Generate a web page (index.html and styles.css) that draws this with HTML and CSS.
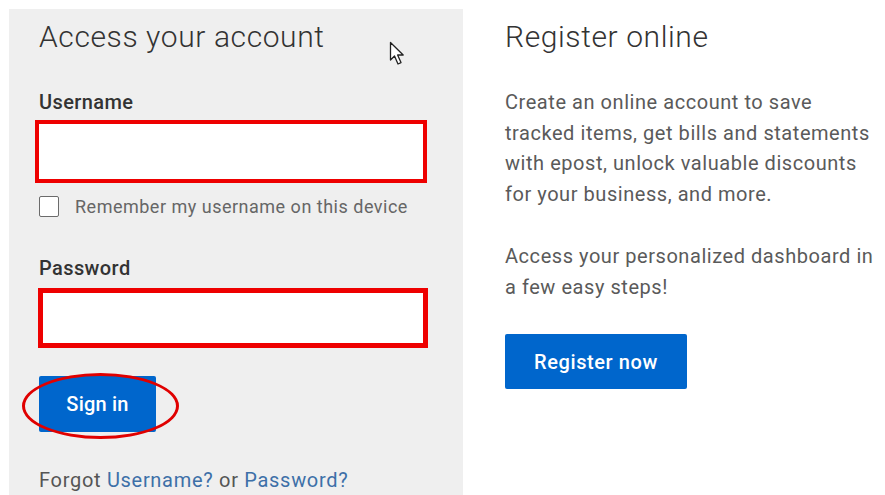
FILE: index.html
```html
<!DOCTYPE html>
<html lang="en">
<head>
<meta charset="utf-8">
<title>Sign in</title>
<link rel="stylesheet" href="styles.css">
</head>
<body>
<main class="page">
  <section class="login">
    <h1 class="title">Access your account</h1>
    <label class="field-label" for="username">Username</label>
    <input class="field field-user" id="username" type="text">
    <label class="remember">
      <span class="box"></span>
      <span class="remember-text">Remember my username on this device</span>
    </label>
    <label class="field-label field-label-pw" for="password">Password</label>
    <input class="field field-pw" id="password" type="password">
    <div class="signin-wrap">
      <button class="btn btn-signin" type="button">Sign in</button>
      <span class="ring"></span>
    </div>
    <p class="forgot">Forgot <a href="#">Username?</a> or <a href="#">Password?</a></p>
    <svg class="pointer" width="17" height="25" viewBox="0 0 17 25">
      <path d="M1.5 1.5 L1.5 19 L5.5 15 L9 23 L12 21.6 L8.6 14 L14.2 14 Z" fill="#fff" stroke="#222" stroke-width="1.3" stroke-linejoin="round"/>
    </svg>
  </section>
  <section class="register">
    <h2 class="title">Register online</h2>
    <p class="copy">Create an online account to save tracked items, get bills and statements with epost, unlock valuable discounts for your business, and more.</p>
    <p class="copy">Access your personalized dashboard in a few easy steps!</p>
    <button class="btn btn-register" type="button">Register now</button>
  </section>
</main>
</body>
</html>
```
FILE: styles.css
```css
* { box-sizing: border-box; }

html, body {
  margin: 0;
  background: #fff;
  font-family: Roboto, "Liberation Sans", sans-serif;
  overflow: hidden;
}

.page {
  display: flex;
  align-items: flex-start;
  height: 495px;
}

.login {
  position: relative;
  margin: 9px 0 0 9px;
  width: 454px;
  height: 500px;
  padding: 10px 0 0 30px;
  background: #efefef;
  display: flex;
  flex-direction: column;
  align-items: flex-start;
}

.title {
  margin: 0;
  font-size: 30px;
  line-height: 36px;
  font-weight: 300;
  letter-spacing: 0.6px;
  color: #333;
}

.field-label {
  margin-top: 35px;
  font-size: 20px;
  line-height: 24px;
  font-weight: 500;
  letter-spacing: 0.4px;
  color: #333;
}

.field-label-pw { margin-top: 39px; }

.field {
  display: block;
  background: #fff;
  border: 4px solid #ee0000;
  border-radius: 0;
  outline: none;
}

.field-user {
  margin: 6px 0 0 -4px;
  width: 392px;
  height: 63px;
}

.field-pw {
  margin: 8px 0 0 -1px;
  width: 390px;
  height: 60px;
  border-width: 5px;
}

.remember {
  margin-top: 13px;
  display: flex;
  align-items: center;
  gap: 16px;
  height: 21px;
}

.box {
  width: 20px;
  height: 21px;
  border: 1.5px solid #6b6b6b;
  border-radius: 2px;
  background: #fff;
}

.remember-text {
  font-size: 18px;
  letter-spacing: 0.5px;
  color: #666;
}

.signin-wrap {
  position: relative;
  margin-top: 28px;
}

.btn {
  border: 0;
  border-radius: 2px;
  background: #0066cc;
  color: #fff;
  font-family: inherit;
  font-weight: 500;
}

.btn-signin {
  display: block;
  width: 117px;
  height: 56px;
  font-size: 20px;
  letter-spacing: 0.2px;
}

/* hand-drawn style highlight ring around the sign-in button */
.ring {
  position: absolute;
  left: -17px;
  top: -3px;
  width: 157px;
  height: 66px;
  border: 3.5px solid #e00000;
  border-radius: 50%;
}

.forgot {
  margin: 36px 0 0;
  font-size: 20px;
  line-height: 24px;
  letter-spacing: 0.7px;
  color: #555;
}

.forgot a {
  color: #3d70a8;
  text-decoration: none;
}

.pointer {
  position: absolute;
  left: 380px;
  top: 32px;
}

.register {
  margin-left: 42px;
  padding-top: 19px;
  width: 378px;
}

.copy {
  margin: 0;
  font-size: 20px;
  line-height: 30.5px;
  letter-spacing: 0.55px;
  color: #5a5a5a;
}

.register .title + .copy { margin-top: 32px; }
.copy + .copy { margin-top: 32px; }

.btn-register {
  display: block;
  margin-top: 32px;
  width: 182px;
  height: 55px;
  font-size: 20px;
  letter-spacing: 0.6px;
}
```
